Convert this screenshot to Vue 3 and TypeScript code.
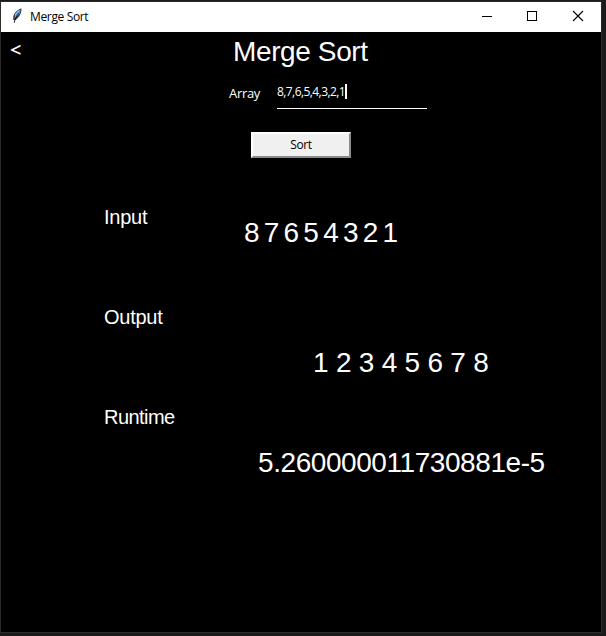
<script setup lang="ts">
import { ref, computed } from 'vue'

const title = 'Merge Sort'
const entry = ref<string>('8,7,6,5,4,3,2,1')
const input = ref<number[]>([8, 7, 6, 5, 4, 3, 2, 1])
const runtime = ref<string>('5.260000011730881e-5')

function mergeSort(list: number[]): number[] {
  if (list.length < 2) return list
  const mid = list.length >> 1
  const left = mergeSort(list.slice(0, mid))
  const right = mergeSort(list.slice(mid))
  const merged: number[] = []
  let i = 0
  let j = 0
  while (i < left.length && j < right.length) {
    merged.push(left[i] <= right[j] ? left[i++] : right[j++])
  }
  return merged.concat(left.slice(i), right.slice(j))
}

const output = computed(() => mergeSort(input.value))

function sort(): void {
  input.value = entry.value.split(',').map(Number)
}
</script>

<template>
  <div class="desktop">
    <div class="window">
      <header class="titlebar">
        <svg class="feather" width="12" height="16" viewBox="0 0 12 16">
          <path d="M10.4 .6C7 1.2 3.5 4.5 2.2 8.6L2.3 12L4.6 12C8.4 9.2 10.8 5 10.4.6Z" fill="#30353f" />
          <path d="M9.5 1.5C6 3 3.8 6 3.2 10L5 9.4C8 7 9.6 4.4 9.5 1.5Z" fill="#5b93dc" />
          <path d="M8.4 2.4C6.4 3.7 4.8 5.4 4.3 7.4" fill="none" stroke="#b9d3f2" stroke-width="1" />
          <path d="M7.5 5.5C5.6 8.2 4 10.5 3.2 14.8" fill="none" stroke="#111" stroke-width=".9" />
        </svg>
        <span class="caption">{{ title }}</span>
        <div class="controls">
          <svg width="46" height="28" viewBox="0 0 46 28" shape-rendering="crispEdges">
            <path d="M18 14.5h10" stroke="#000" />
          </svg>
          <svg width="46" height="28" viewBox="0 0 46 28" shape-rendering="crispEdges">
            <rect x="17.5" y="9.5" width="9" height="9" fill="none" stroke="#000" />
          </svg>
          <svg width="45" height="28" viewBox="0 0 45 28">
            <path d="M17 9l10 10M27 9l-10 10" stroke="#000" stroke-width="1.1" />
          </svg>
        </div>
      </header>
      <main class="content">
        <div class="heading">
          <span class="back">&lt;</span>
          <h1>{{ title }}</h1>
        </div>
        <div class="field">
          <label>Array</label>
          <div class="entry"><span>{{ entry }}</span><i class="caret"></i></div>
        </div>
        <button class="sort" @click="sort">Sort</button>
        <section class="row row-input">
          <h2>Input</h2>
          <p>{{ input.join(' ') }}</p>
        </section>
        <section class="row row-output">
          <h2>Output</h2>
          <p>{{ output.join(' ') }}</p>
        </section>
        <section class="row row-runtime">
          <h2 class="tight">Runtime</h2>
          <p>{{ runtime }}</p>
        </section>
      </main>
    </div>
  </div>
</template>

<style>
body {
  background: #1b1b1c;
}
</style>

<style scoped>
.desktop {
  box-sizing: border-box;
  width: 606px;
  height: 636px;
  padding-top: 1px;
  background: #1b1b1c;
  overflow: hidden;
}
.window {
  width: 600px;
  height: 630px;
  border: 1px solid #2b2b2b;
  background: #000;
}
.titlebar {
  display: flex;
  height: 30px;
  background: #fff;
}
.feather {
  margin: 6px 0 0 10px;
}
.caption {
  margin-left: 7px;
  font: 12px/29px "Open Sans", "Noto Sans", sans-serif;
  letter-spacing: -0.35px;
  color: #000;
  white-space: nowrap;
}
.controls {
  display: flex;
  margin-left: auto;
}
.content {
  display: flex;
  flex-direction: column;
  color: #fff;
  font-family: "Liberation Sans", Arial, sans-serif;
}
.heading {
  display: flex;
  height: 40px;
}
.back {
  width: 223px;
  padding-left: 9px;
  font: 600 20px/36px "Open Sans", sans-serif;
}
h1 {
  margin: 0;
  font-size: 28px;
  font-weight: 400;
  line-height: 39px;
  letter-spacing: -0.38px;
  white-space: nowrap;
}
.field {
  display: flex;
  height: 37px;
  padding-left: 228px;
}
label {
  width: 48px;
  font: 13px/43px "Open Sans", sans-serif;
  letter-spacing: -0.3px;
}
.entry {
  box-sizing: border-box;
  display: flex;
  width: 150px;
  height: 37px;
  padding-top: 12px;
  border-bottom: 1px solid #fff;
}
.entry span {
  font: 12px/16px "Open Sans", sans-serif;
  letter-spacing: -0.57px;
}
.caret {
  width: 2px;
  height: 15px;
  background: #fff;
}
.sort {
  box-sizing: border-box;
  width: 100px;
  height: 26px;
  margin: 23px 0 0 250px;
  padding: 0 0 1px;
  border: 2px solid;
  border-color: #fff #8a8a8a #8a8a8a #fff;
  background: #f0f0f0;
  color: #000;
  font: 12px/20px "Open Sans", sans-serif;
  letter-spacing: -0.4px;
}
.row {
  display: grid;
  height: 100px;
  padding-left: 103px;
  align-content: start;
}
.row-input {
  margin-top: 48px;
}
h2 {
  grid-area: 1 / 1;
  margin: 0;
  font-size: 20px;
  font-weight: 400;
  line-height: 23px;
  letter-spacing: -0.25px;
}
.tight {
  letter-spacing: -0.55px;
}
p {
  grid-area: 1 / 1;
  margin: 0;
  font-size: 28px;
  line-height: 31px;
  letter-spacing: -0.43px;
  white-space: pre;
}
.row-input p {
  padding: 11px 0 0 140px;
  word-spacing: -2.7px;
}
.row-output p {
  padding: 41px 0 0 209px;
  word-spacing: 0.4px;
}
.row-runtime p {
  padding: 41px 0 0 154px;
}
</style>
